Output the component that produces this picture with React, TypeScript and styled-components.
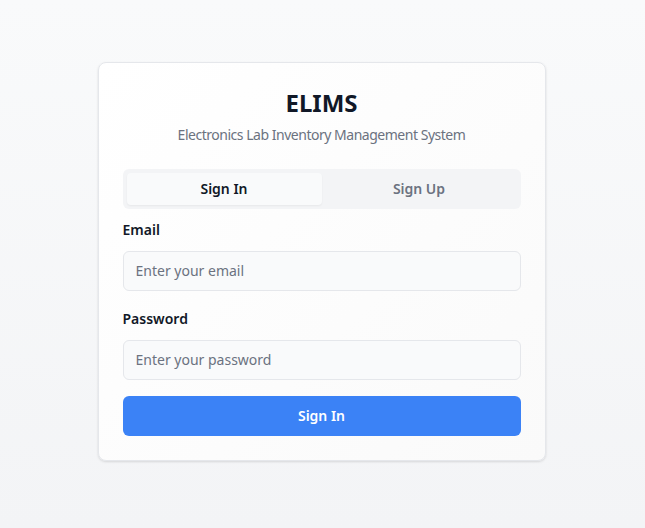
import React, { useState } from "react";
import styled, { createGlobalStyle } from "styled-components";

const GlobalStyle = createGlobalStyle`
  html, body { margin: 0; padding: 0; }
  body {
    font-family: "Noto Sans", "Open Sans", sans-serif;
    -webkit-font-smoothing: antialiased;
  }
  * { box-sizing: border-box; }
`;

const Page = styled.div`
  min-height: 528px;
  display: flex;
  align-items: center;
  justify-content: center;
  padding: 0 2px 6px 0;
  background: linear-gradient(to bottom, #f9fafb, #f3f4f6);
`;

const Card = styled.div`
  width: 448px;
  background: linear-gradient(135deg, #ffffff, #fafafa);
  border: 1px solid #e5e7eb;
  border-radius: 8px;
  box-shadow: 0 1px 3px rgba(0, 0, 0, 0.08), 0 1px 2px rgba(0, 0, 0, 0.05);
  padding: 24px;
  display: flex;
  flex-direction: column;
`;

const Header = styled.div`
  display: flex;
  flex-direction: column;
  align-items: center;
  margin-bottom: 24px;
`;

const Title = styled.h1`
  margin: 0;
  font-size: 24px;
  line-height: 32px;
  font-weight: 700;
  color: #111827;
`;

const Subtitle = styled.p`
  margin: 6px 0 0;
  font-size: 14px;
  line-height: 20px;
  letter-spacing: -0.48px;
  color: #6b7280;
`;

const Tabs = styled.div`
  display: grid;
  grid-template-columns: 1fr 1fr;
  height: 40px;
  padding: 4px;
  border-radius: 6px;
  background: #f3f4f6;
  margin-bottom: 11px;
`;

const Tab = styled.button<{ $active?: boolean }>`
  border: none;
  border-radius: 4px;
  font-family: inherit;
  font-size: 14px;
  font-weight: 600;
  padding-top: 1px;
  cursor: pointer;
  color: ${(p) => (p.$active ? "#111827" : "#6b7280")};
  background: ${(p) => (p.$active ? "#f9fafb" : "transparent")};
  box-shadow: ${(p) => (p.$active ? "0 1px 2px rgba(0,0,0,0.05)" : "none")};
`;

const Form = styled.form`
  display: flex;
  flex-direction: column;
`;

const Field = styled.div`
  display: flex;
  flex-direction: column;
  gap: 11px;
  margin-bottom: 18px;
  &:last-of-type { margin-bottom: 16px; }
`;

const Label = styled.label`
  font-size: 14px;
  line-height: 20px;
  font-weight: 600;
  color: #111827;
`;

const Input = styled.input`
  height: 40px;
  padding: 0 12px;
  border: 1px solid #e5e7eb;
  border-radius: 6px;
  background: #f9fafb;
  font-family: inherit;
  font-size: 14px;
  color: #111827;
  outline: none;
  &::placeholder { color: #6b7280; }
`;

const Submit = styled.button`
  height: 40px;
  border: none;
  border-radius: 6px;
  padding-top: 1px;
  background: #3b82f6;
  color: #ffffff;
  font-family: inherit;
  font-size: 14px;
  font-weight: 600;
  cursor: pointer;
`;

export default function App() {
  const [tab, setTab] = useState<"in" | "up">("in");
  return (
    <>
      <GlobalStyle />
      <Page>
        <Card>
          <Header>
            <Title>ELIMS</Title>
            <Subtitle>Electronics Lab Inventory Management System</Subtitle>
          </Header>
          <Tabs>
            <Tab $active={tab === "in"} onClick={() => setTab("in")}>Sign In</Tab>
            <Tab $active={tab === "up"} onClick={() => setTab("up")}>Sign Up</Tab>
          </Tabs>
          <Form onSubmit={(e) => e.preventDefault()}>
            <Field>
              <Label htmlFor="email">Email</Label>
              <Input id="email" type="email" placeholder="Enter your email" />
            </Field>
            <Field>
              <Label htmlFor="password">Password</Label>
              <Input id="password" type="password" placeholder="Enter your password" />
            </Field>
            <Submit type="submit">Sign In</Submit>
          </Form>
        </Card>
      </Page>
    </>
  );
}
